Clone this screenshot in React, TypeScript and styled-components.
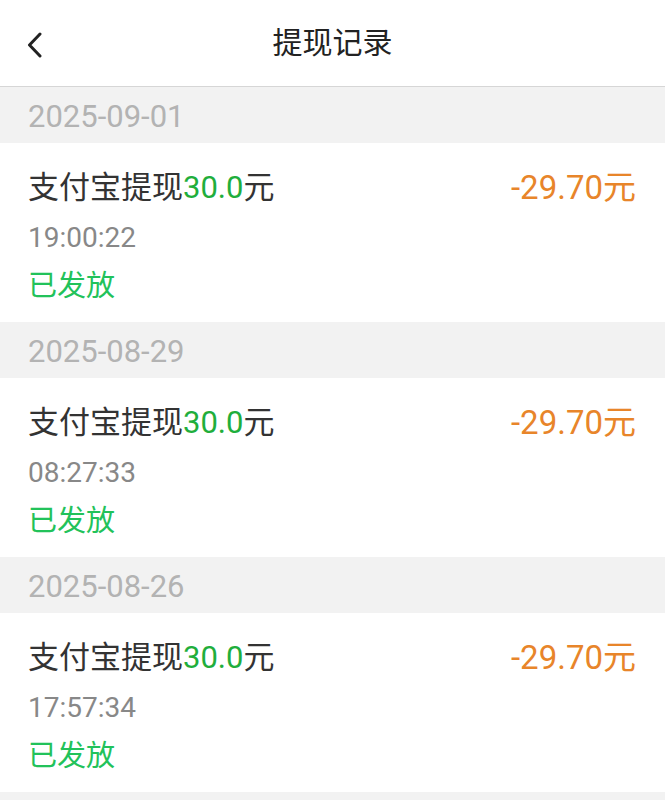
import styled, { createGlobalStyle } from "styled-components";

const records = [
  { date: "2025-09-01", time: "19:00:22" },
  { date: "2025-08-29", time: "08:27:33" },
  { date: "2025-08-26", time: "17:57:34" },
];

const GlobalStyle = createGlobalStyle`
  html, body {
    margin: 0;
    padding: 0;
    background: #f2f2f2;
  }
  body {
    font-family: Roboto, "Noto Sans CJK SC", sans-serif;
  }
`;

function App() {
  return (
    <Page>
      <GlobalStyle />
      <Header>
        <BackButton>
          <svg width="20" height="26" viewBox="0 0 20 26" fill="none">
            <path
              d="M15 2 L4.5 13 L15 24"
              stroke="#222"
              strokeWidth="3"
              strokeLinecap="round"
              strokeLinejoin="round"
            />
          </svg>
        </BackButton>
        <Title>提现记录</Title>
      </Header>

      {records.map((r) => (
        <Group key={r.date}>
          <DateBar>{r.date}</DateBar>
          <Card>
            <Row>
              <ItemTitle>
                支付宝提现<Amount>30.0</Amount>元
              </ItemTitle>
              <Deduct>-29.70元</Deduct>
            </Row>
            <Time>{r.time}</Time>
            <Status>已发放</Status>
          </Card>
        </Group>
      ))}
    </Page>
  );
}

const Page = styled.div`
  width: 665px;
  min-height: 800px;
  background: #f2f2f2;
`;

const Header = styled.header`
  position: relative;
  height: 86px;
  background: #fff;
  border-bottom: 1px solid #d6d6d6;
  display: flex;
  align-items: center;
  justify-content: center;
`;

const BackButton = styled.div`
  position: absolute;
  left: 25px;
  top: 32px;
  display: flex;
`;

const Title = styled.h1`
  margin: 0;
  font-size: 30px;
  font-weight: 400;
  color: #222;
  line-height: 1;
`;

const Group = styled.section`
  display: flex;
  flex-direction: column;
`;

const DateBar = styled.div`
  height: 56px;
  padding-left: 28px;
  display: flex;
  align-items: center;
  font-size: 31px;
  color: #b3b3b3;
  background: #f2f2f2;
  padding-top: 2px;
  box-sizing: border-box;
`;

const Card = styled.div`
  height: 179px;
  box-sizing: border-box;
  padding: 26px 29px 0 28px;
  background: #fff;
  display: flex;
  flex-direction: column;
`;

const Row = styled.div`
  display: flex;
  justify-content: space-between;
  align-items: center;
  height: 38px;
`;

const ItemTitle = styled.div`
  font-size: 31px;
  color: #333;
  line-height: 38px;
`;

const Amount = styled.span`
  color: #1fae3c;
`;

const Deduct = styled.div`
  font-size: 33px;
  color: #e8852a;
  line-height: 38px;
`;

const Time = styled.div`
  margin-top: 12px;
  font-size: 28px;
  color: #888;
  line-height: 38px;
`;

const Status = styled.div`
  margin-top: 10px;
  font-size: 29px;
  color: #22c25a;
  line-height: 38px;
`;

export default App;
